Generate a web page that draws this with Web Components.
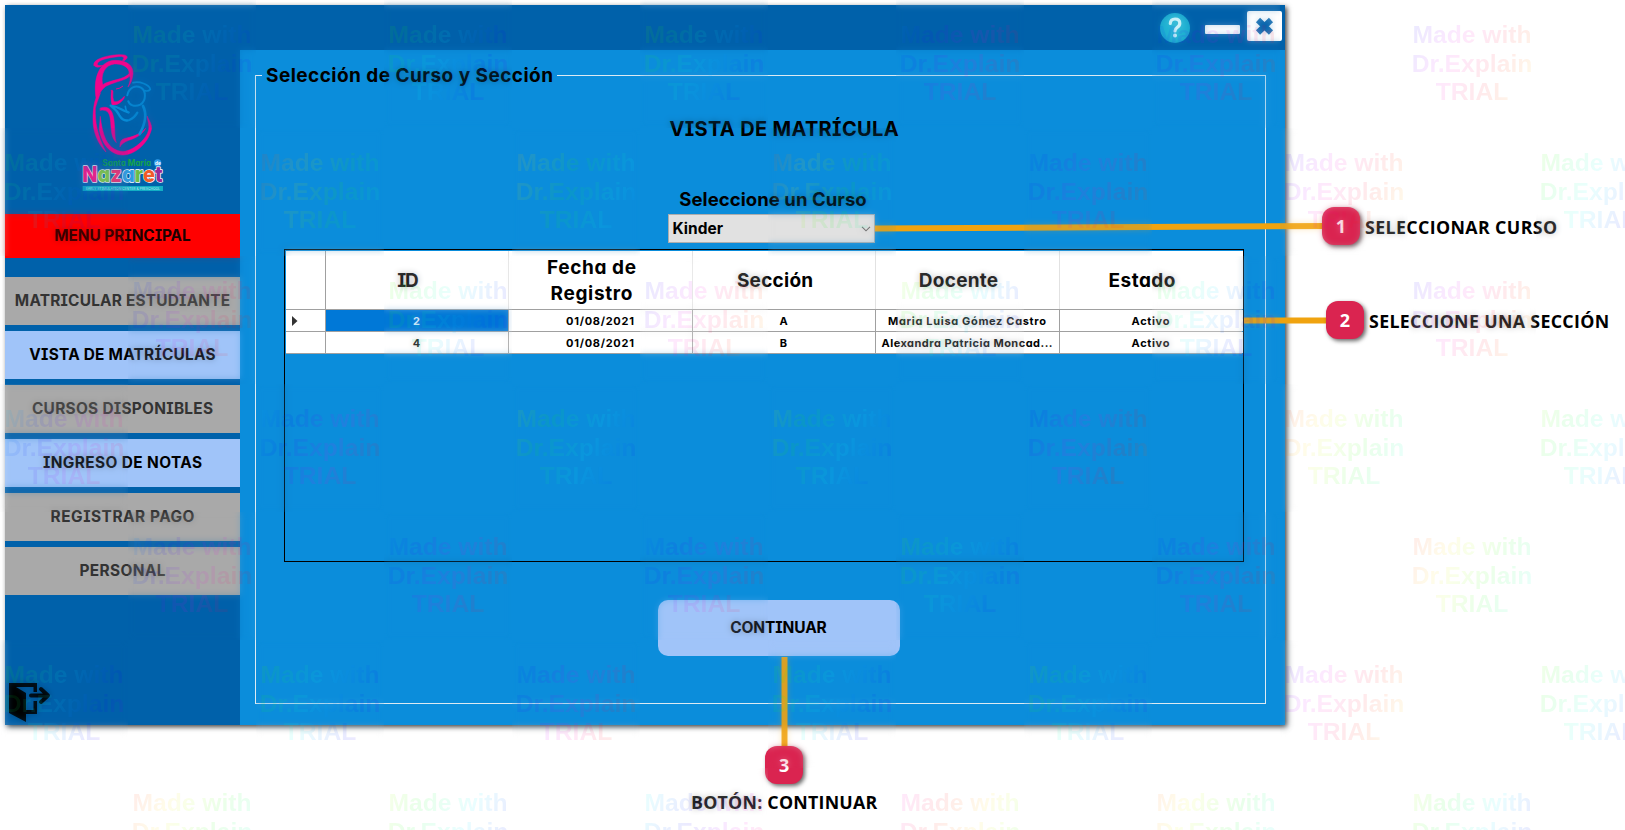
<!DOCTYPE html>
<html lang="es">
<head>
<meta charset="utf-8">
<title>Vista de Matrícula</title>
<style>
  html, body { margin: 0; background: #fff; }
  body { position: relative; width: 1625px; height: 830px; overflow: hidden; font-family: Inter, "Noto Sans", sans-serif; font-feature-settings: "cv08" 1, "cv11" 1; color: #000; }
</style>
</head>
<body>
<help-window></help-window>
<callout-layer></callout-layer>
<trial-watermark></trial-watermark>

<script>
function mount(el, html) {
  el.attachShadow({ mode: 'open' }).innerHTML = html;
}

/* Text whose letter spacing is adjusted to fill a given width */
class FitText extends HTMLElement {
  constructor() {
    super();
    mount(this, '<style>:host{display:inline-block;white-space:nowrap;line-height:1.2}</style><slot></slot>');
  }
  connectedCallback() {
    const target = parseFloat(this.getAttribute('w')) + 1.5;
    const gap = (target - this.getBoundingClientRect().width) / this.textContent.length;
    this.style.letterSpacing = gap + 'px';
    this.style.marginRight = -gap + 'px';
  }
}
customElements.define('fit-text', FitText);

class SchoolLogo extends HTMLElement {
  constructor() {
    super();
    mount(this, `<style>:host{display:block;width:110px;height:160px}svg{display:block}</style>
<svg width="110" height="160" viewBox="0 0 330 480" fill="none" stroke-linecap="round" stroke-linejoin="round">
  <g fill="#f0058c" stroke="#f0058c" stroke-width="1.500">
    <path d="M72 76C66 58 110 45 150 44C172 43 179 52 163 62L157 61C167 52 158 48 143 50C115 53 83 60 82 72C81 78 94 77 99 76C88 84 76 83 72 76Z"/>
    <path d="M79 178C68 120 85 63 135 61C173 61 190 78 189 101C187 119 183 129 174 141C181 125 182 115 179 108C168 121 139 124 111 137C99 143 91 155 79 178ZM98 134C118 120 165 119 178 100C178 80 153 70 133 72C106 75 91 101 98 134Z" fill-rule="evenodd"/>
    <path d="M124 151Q129 150 129 154Q127 175 132 185Q147 188 163 169Q165 174 155 184Q143 197 126 195Q121 178 124 151Z"/>
    <path d="M91 160C80 190 78 196 76 206C75 245 81 285 108 336C84 313 69 275 69 241C69 205 73 180 82 167Z"/>
    <path d="M91 204C118 194 129 214 132 241C136 277 133 290 139 308C125 295 124 276 122 247C120 222 115 207 91 211Z"/>
    <path d="M91 230Q95 270 107 298C121 327 145 336 165 334C198 326 229 297 236 270C239 257 232 238 231 228C242 248 248 261 243 273C231 314 193 344 160 345C119 346 93 307 88 267Z"/>
    <path d="M150 320C149 305 154 297 170 294C195 289 214 279 227 265C217 284 196 295 176 301C161 306 153 315 150 320Z"/>
  </g>
  <g stroke="#078bd6" stroke-width="6">
    <path d="M189 128C208 122 238 134 241 148Q235 155 224 152" stroke-width="5"/>
    <path d="M172 166C177 141 197 135 213 143C228 152 230 181 211 194C193 202 178 195 175 184"/>
    <path d="M122 197C148 199 155 213 176 217M122 197Q140 210 148 226Q160 246 178 240Q193 234 202 218" stroke-width="7"/>
    <path d="M166 199Q168 217 176 218" stroke-width="5"/>
    <path d="M219 198C232 222 225 252 209 282" stroke-width="8"/>
  </g>
  <path d="M139 147Q150 146 158 139" stroke="#f0058c" stroke-width="3"/>
  <text x="97" y="378" textLength="146" lengthAdjust="spacingAndGlyphs" font-size="27" font-weight="700" fill="#16a34a">Santa María</text>
  <circle cx="263" cy="369" r="11" fill="#2f9bea"/>
  <text x="255" y="375" font-size="14" font-weight="700" fill="#fff">de</text>
  <text x="37" y="427" textLength="241" lengthAdjust="spacingAndGlyphs" font-size="66" font-weight="800" stroke="#fff" stroke-width="4" paint-order="stroke"><tspan fill="#ec1487">N</tspan><tspan fill="#7ac143">a</tspan><tspan fill="#ee2a6e">z</tspan><tspan fill="#2e9be0">a</tspan><tspan fill="#6abd45">r</tspan><tspan fill="#f15a29">e</tspan><tspan fill="#9b2796">t</tspan></text>
  <rect x="38" y="438" width="241" height="15" fill="#12aec4"/>
  <text x="47" y="450" textLength="223" lengthAdjust="spacingAndGlyphs" font-size="11" fill="#bde9f0">EARLY STIMULATION CENTER &amp; PRESCHOOL</text>
</svg>`);
  }
}
customElements.define('school-logo', SchoolLogo);

class MenuItem extends HTMLElement {
  constructor() {
    super();
    mount(this, `<style>
:host{display:flex;align-items:center;justify-content:center;height:48px;background:#a9a9a9;color:#333;font-size:15.4px;font-weight:650;box-sizing:border-box;padding-top:1px}
:host([tone=blue]){background:#a0c4f9;color:#000}
:host([tone=red]){background:#f00;color:#1c0000;height:44px;margin-bottom:13px}
</style><slot></slot>`);
  }
}
customElements.define('menu-item', MenuItem);

class SideMenu extends HTMLElement {
  constructor() {
    super();
    mount(this, `<style>
:host{display:flex;flex-direction:column;width:235px;background:#0061aa}
school-logo{margin:35px 0 14px 65px}
nav{display:flex;flex-direction:column;gap:6px}
.exit{margin-top:auto;padding:0 0 3px 4px;line-height:0}
</style>
<school-logo></school-logo>
<nav>
  <menu-item tone="red"><fit-text w="135">MENU PRINCIPAL</fit-text></menu-item>
  <menu-item><fit-text w="214">MATRICULAR ESTUDIANTE</fit-text></menu-item>
  <menu-item tone="blue"><fit-text w="185">VISTA DE MATRÍCULAS</fit-text></menu-item>
  <menu-item><fit-text w="180">CURSOS DISPONIBLES</fit-text></menu-item>
  <menu-item tone="blue"><fit-text w="158">INGRESO DE NOTAS</fit-text></menu-item>
  <menu-item><fit-text w="143">REGISTRAR PAGO</fit-text></menu-item>
  <menu-item><fit-text w="85">PERSONAL</fit-text></menu-item>
</nav>
<div class="exit"><svg width="42" height="40" viewBox="0 0 42 40">
  <path d="M0 1H28V10H24.500V5H7L17 11V28H24.500V19H28V32H17V40L0 31Z"/>
  <path d="M22 13.5H38M32 7L39 13.5L32 20" fill="none" stroke="#000" stroke-width="4" stroke-linecap="round" stroke-linejoin="round"/>
</svg></div>`);
  }
}
customElements.define('side-menu', SideMenu);

class TitleBar extends HTMLElement {
  constructor() {
    super();
    mount(this, `<style>
:host{display:flex;justify-content:flex-end;height:45px;box-sizing:border-box;padding:6px 3px 0 0;background:#0061aa}
svg{display:block}
</style>
<svg width="122" height="32" viewBox="0 0 122 32">
  <circle cx="15" cy="17" r="15" fill="#1fb3d3"/>
  <path d="M10.3 12.5Q10.5 8 15 8Q19.800 8 19.800 12.3Q19.800 15 17 16.600Q15 17.900 15 20" fill="none" stroke="#e8fbff" stroke-width="3.200" stroke-linecap="round"/>
  <circle cx="15" cy="24.600" r="2" fill="#e8fbff"/>
  <rect x="45" y="14" width="35" height="9" rx="1" fill="#fff"/>
  <rect x="87" y="0" width="35" height="30" rx="2" fill="#fff"/>
  <path d="M98 9L111 21.500M111 9L98 21.500" stroke="#0061aa" stroke-width="6"/>
</svg>`);
  }
}
customElements.define('title-bar', TitleBar);

class CourseSelect extends HTMLElement {
  constructor() {
    super();
    mount(this, `<style>
:host{display:flex;align-items:center;justify-content:space-between;box-sizing:border-box;width:207px;height:29px;padding:1px 3px 0 4px;background:#e1e1e1;border:1px solid #adadad;font-size:15.500px;font-weight:700}
</style><slot></slot><svg width="10" height="6" viewBox="0 0 10 6"><path d="M1 .8L5 4.800L9 .8" fill="none" stroke="#555" stroke-width="1.100"/></svg>`);
  }
}
customElements.define('course-select', CourseSelect);

class SectionTable extends HTMLElement {
  constructor() {
    super();
    mount(this, `<style>
:host{display:block;box-sizing:border-box;width:960px;height:313px;border:1px solid #000;padding:1px}
.row{display:grid;grid-template-columns:40px 183px 184px 183px 184px 183px;height:22px;background:#fff;font-size:11px;font-weight:700;box-sizing:border-box;border-bottom:1px solid #a0a0a0}
.head{height:59px;font-size:19px}
.row>div{display:flex;flex-direction:column;align-items:center;justify-content:center;border-right:1px solid #a0a0a0;box-sizing:border-box}
.row:not(.head)>div{padding-right:1px;padding-top:1px}
.row>div:last-child{border-right-color:#fff}
.head>div{border-color:#e2e2e2;line-height:26px;padding:2px 18px 0 0}
.head>div:first-child{border-color:#a0a0a0}
.head fit-text{line-height:26px;height:26px}
.row .sel{background:#0078d7;color:#fff}
.row>.mark{align-items:flex-start;padding-left:6px}
</style>
<div class="row head"><div></div><div><fit-text w="19">ID</fit-text></div><div><fit-text w="88">Fecha de</fit-text><fit-text w="81">Registro</fit-text></div><div><fit-text w="75">Sección</fit-text></div><div><fit-text w="78">Docente</fit-text></div><div><fit-text w="66">Estado</fit-text></div></div>
<div class="row"><div class="mark"><svg width="6" height="10" viewBox="0 0 6 10"><path d="M0 0L5.500 5L0 10Z" fill="#333"/></svg></div><div class="sel">2</div><div><fit-text w="67">01/08/2021</fit-text></div><div>A</div><div><fit-text w="157">Maria Luisa Gómez Castro</fit-text></div><div><fit-text w="37">Activo</fit-text></div></div>
<div class="row"><div></div><div>4</div><div><fit-text w="67">01/08/2021</fit-text></div><div>B</div><div><fit-text w="170">Alexandra Patricia Moncad...</fit-text></div><div><fit-text w="37">Activo</fit-text></div></div>`);
  }
}
customElements.define('section-table', SectionTable);

class CoursePanel extends HTMLElement {
  constructor() {
    super();
    mount(this, `<style>
:host{display:block;padding:14px 19px 21px 15px;background:#0b8ddb;box-sizing:border-box;height:675px}
fieldset{box-sizing:border-box;height:640px;margin:0;border:1px solid #dceaf3;padding:0 21px 0 28px;min-width:0;display:flex;flex-direction:column;align-items:center}
legend{padding:0 4px 0 4px;margin-left:-22px;font-size:19px;font-weight:700;height:23px;line-height:23px}
.title{font-size:20px;font-weight:650;margin:30px 0 0 40px}
.label{font-size:18.500px;font-weight:700;margin:47px 0 0 18px}
course-select{margin:4px 0 6px 14px}
button{margin:38px 0 0 29px;width:242px;height:56px;border:0;border-radius:10px;background:#a0c4f9;font:650 15.500px Inter,sans-serif;font-feature-settings:inherit;color:#000;padding:0}
</style>
<fieldset>
  <legend><fit-text w="286">Selección de Curso y Sección</fit-text></legend>
  <fit-text class="title" w="228">VISTA DE MATRÍCULA</fit-text>
  <fit-text class="label" w="186">Seleccione un Curso</fit-text>
  <course-select><fit-text w="49">Kinder</fit-text></course-select>
  <section-table></section-table>
  <button><fit-text w="95">CONTINUAR</fit-text></button>
</fieldset>`);
  }
}
customElements.define('course-panel', CoursePanel);

class HelpWindow extends HTMLElement {
  constructor() {
    super();
    mount(this, `<style>
:host{display:grid;grid-template:45px 675px / 235px 1045px;width:1280px;height:720px;margin:5px;float:left;box-shadow:2px 2px 5px rgba(0,0,0,.75)}
side-menu{grid-row:1 / 3}
</style><side-menu></side-menu><title-bar></title-bar><course-panel></course-panel>`);
  }
}
customElements.define('help-window', HelpWindow);

/* Numbered badges, their leader lines and captions, laid over the window */
class CalloutLayer extends HTMLElement {
  constructor() {
    super();
    mount(this, `<style>
:host{position:absolute;inset:0;font-family:"Open Sans","Noto Sans",sans-serif;font-weight:700;font-size:17.800px}
svg,.c{position:absolute}
.c{display:flex;align-items:center;gap:5px}
.c:not(.v) fit-text{padding-top:3px}
.c.v{flex-direction:column;gap:8px}
b{display:flex;align-items:center;justify-content:center;width:38px;height:38px;border-radius:12px;background:#da2450;color:#fff;font-size:18px;font-weight:700;box-shadow:2px 2px 4px rgba(0,0,0,.6)}
</style>
<svg width="1625" height="830" fill="none" stroke="#f0a30f" stroke-width="6"><path d="M875 228.500L1330 226M1244 320.500H1330M784.500 657V750"/></svg>
<div class="c" style="left:1322px;top:207px"><b>1</b><fit-text w="191">SELECCIONAR CURSO</fit-text></div>
<div class="c" style="left:1326px;top:301px"><b>2</b><fit-text w="239">SELECCIONE UNA SECCIÓN</fit-text></div>
<div class="c v" style="left:691px;top:746px"><b>3</b><fit-text w="185">BOTÓN: CONTINUAR</fit-text></div>`);
  }
}
customElements.define('callout-layer', CalloutLayer);

class TrialTile extends HTMLElement {
  constructor() {
    super();
    mount(this, `<style>
:host{display:block;position:relative;width:128px;height:128px;overflow:hidden}
.haze{position:absolute;inset:0;backdrop-filter:blur(3px);opacity:.26}
.t{position:relative;height:128px;box-sizing:border-box;padding-top:21px;font:700 24.670px/28.500px "Liberation Sans",Arial,sans-serif;text-align:center;white-space:pre;color:transparent;background-clip:text;-webkit-background-clip:text;opacity:.085;font-feature-settings:normal}
</style><div class="haze"></div><div class="t">Made with
Dr.Explain
TRIAL</div>`);
  }
  connectedCallback() {
    const h = +this.getAttribute('hue');
    const stops = [0, 30, 60, 90, 120, 150, 180, 210].map(d => 'hsl(' + (h - 10 + d) + ' 100% 50%)');
    this.shadowRoot.querySelector('.t').style.backgroundImage = 'linear-gradient(115deg,' + stops.join(',') + ')';
  }
}
customElements.define('trial-tile', TrialTile);

class TrialWatermark extends HTMLElement {
  constructor() {
    super();
    const rows = [
      [90, 100, 90, 200, 210, 235], [110, 0, 35, 10, 210, 235, 95],
      [210, 90, 230, 80, 110, 235], [180, 190, 70, 70, 220, 0, 85],
      [195, 205, 200, 90, 210, 0], [100, 95, 210, 95, 85, 240, 90],
      [0, 75, 170, 300, 15, 75]
    ];
    let cells = '';
    rows.forEach((r, i) => r.forEach((h, j) => {
      cells += `<trial-tile hue="${h}" style="grid-area:${i + 1} / ${2 * j + (i % 2 ? 1 : 2)}"></trial-tile>`;
    }));
    mount(this, `<style>:host{position:absolute;inset:0;overflow:hidden;display:grid;grid-template:repeat(7,128px) / repeat(13,128px);pointer-events:none}</style>${cells}`);
  }
}
customElements.define('trial-watermark', TrialWatermark);
</script>
</body>
</html>
